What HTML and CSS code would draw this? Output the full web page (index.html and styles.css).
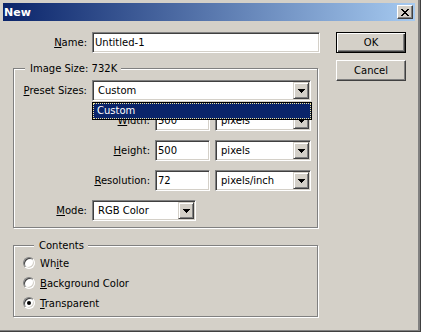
FILE: index.html
```html
<!DOCTYPE html>
<html lang="en">
<head>
    <meta charset="UTF-8">
    <meta name="viewport" content="width=device-width, initial-scale=1.0">
    <title>New</title>
    <link rel="stylesheet" href="styles.css">
</head>
<body>
    <div class="window">
        <div class="titlebar">
            <span class="title">New</span>
            <span class="close-btn">
                <svg width="8" height="7" viewBox="0 0 8 7"><path d="M0 0h2v1h-2z M6 0h2v1h-2z M1 1h2v1h-2z M5 1h2v1h-2z M2 2h4v1h-4z M3 3h2v1h-2z M2 4h4v1h-4z M1 5h2v1h-2z M5 5h2v1h-2z M0 6h2v1h-2z M6 6h2v1h-2z" fill="#000"/></svg>
            </span>
        </div>

        <div class="dialog">
            <div class="form">
                <div class="row">
                    <label class="lbl lbl-name"><u>N</u>ame:</label>
                    <div class="field name-field">Untitled-1</div>
                </div>

                <fieldset class="group image-group">
                    <legend>Image Size: 732K</legend>
                    <div class="rows">
                        <div class="row">
                            <label class="lbl lbl-short"><u>P</u>reset Sizes:</label>
                            <div class="combo preset-combo">
                                <span class="combo-text">Custom</span>
                                <span class="combo-btn"><svg width="7" height="4" viewBox="0 0 7 4"><path d="M0 0h7v1h-1v1h-1v1h-1v1h-1v-1h-1v-1h-1v-1h-1z" fill="#000"/></svg></span>
                                <div class="dropdown"><div class="dropdown-item">Custom</div></div>
                            </div>
                        </div>
                        <div class="row">
                            <label class="lbl lbl-long"><u>W</u>idth:</label>
                            <div class="field num-field">500</div>
                            <div class="combo unit-combo">
                                <span class="combo-text">pixels</span>
                                <span class="combo-btn"><svg width="7" height="4" viewBox="0 0 7 4"><path d="M0 0h7v1h-1v1h-1v1h-1v1h-1v-1h-1v-1h-1v-1h-1z" fill="#000"/></svg></span>
                            </div>
                        </div>
                        <div class="row">
                            <label class="lbl lbl-long"><u>H</u>eight:</label>
                            <div class="field num-field">500</div>
                            <div class="combo unit-combo">
                                <span class="combo-text">pixels</span>
                                <span class="combo-btn"><svg width="7" height="4" viewBox="0 0 7 4"><path d="M0 0h7v1h-1v1h-1v1h-1v1h-1v-1h-1v-1h-1v-1h-1z" fill="#000"/></svg></span>
                            </div>
                        </div>
                        <div class="row">
                            <label class="lbl lbl-long"><u>R</u>esolution:</label>
                            <div class="field num-field">72</div>
                            <div class="combo unit-combo">
                                <span class="combo-text">pixels/inch</span>
                                <span class="combo-btn"><svg width="7" height="4" viewBox="0 0 7 4"><path d="M0 0h7v1h-1v1h-1v1h-1v1h-1v-1h-1v-1h-1v-1h-1z" fill="#000"/></svg></span>
                            </div>
                        </div>
                        <div class="row">
                            <label class="lbl lbl-short"><u>M</u>ode:</label>
                            <div class="combo mode-combo">
                                <span class="combo-text">RGB Color</span>
                                <span class="combo-btn"><svg width="7" height="4" viewBox="0 0 7 4"><path d="M0 0h7v1h-1v1h-1v1h-1v1h-1v-1h-1v-1h-1v-1h-1z" fill="#000"/></svg></span>
                            </div>
                        </div>
                    </div>
                </fieldset>

                <fieldset class="group contents-group">
                    <legend>Contents</legend>
                    <div class="radios">
                        <div class="radio-row"><span class="radio"></span><span>Wh<u>i</u>te</span></div>
                        <div class="radio-row"><span class="radio"></span><span><u>B</u>ackground Color</span></div>
                        <div class="radio-row"><span class="radio checked"></span><span><u>T</u>ransparent</span></div>
                    </div>
                </fieldset>
            </div>

            <div class="buttons">
                <div class="btn default">OK</div>
                <div class="btn">Cancel</div>
            </div>
        </div>
    </div>
</body>
</html>
```

FILE: styles.css
```css
body {
    margin: 0;
    background: #d4d0c8;
    font-family: "DejaVu Sans", sans-serif;
    font-size: 10px;
    color: #000;
}
.window {
    width: 421px;
    height: 332px;
    box-sizing: border-box;
    background: #d4d0c8;
    box-shadow: inset -1px -1px 0 #404040, inset -3px -2px 0 #808080;
    overflow: hidden;
}
.titlebar {
    height: 18px;
    margin: 3px 6px 0 3px;
    padding: 0 2px 0 1px;
    display: flex;
    align-items: center;
    justify-content: space-between;
    background: linear-gradient(to right, #0a246a, #a6caf0);
}
.title {
    color: #fff;
    font-weight: bold;
    font-size: 11px;
}
.close-btn {
    width: 16px;
    height: 14px;
    box-sizing: border-box;
    display: flex;
    align-items: center;
    justify-content: center;
    padding-right: 1px;
    background: #d4d0c8;
    border: 1px solid;
    border-color: #fff #404040 #404040 #fff;
    box-shadow: inset -1px -1px 0 #808080;
}
.close-btn svg {
    display: block;
}
.dialog {
    display: flex;
    padding-top: 11px;
}
.form {
    width: 320px;
}
.row {
    display: flex;
    align-items: center;
    height: 21px;
}
.lbl {
    text-align: right;
    margin-right: 5px;
    white-space: nowrap;
}
.lbl-name {
    width: 87px;
}
.lbl-short {
    width: 73px;
}
.lbl-long {
    width: 136px;
}
.field, .combo {
    height: 21px;
    box-sizing: border-box;
    background: #fff;
    border: 1px solid;
    border-color: #808080 #fff #fff #808080;
    box-shadow: inset 1px 1px 0 #404040, inset -1px -1px 0 #d4d0c8;
    padding: 1px 1px 1px 2px;
    line-height: 17px;
    white-space: nowrap;
}
.name-field {
    width: 228px;
}
.num-field {
    width: 55px;
    margin-right: 5px;
}
.combo {
    position: relative;
    display: flex;
    padding: 1px;
}
.preset-combo {
    width: 219px;
}
.unit-combo {
    width: 96px;
}
.mode-combo {
    width: 104px;
}
.combo-text {
    flex: 1;
    padding-left: 4px;
}
.combo-btn {
    width: 16px;
    height: 17px;
    box-sizing: border-box;
    display: flex;
    align-items: center;
    justify-content: center;
    background: #d4d0c8;
    border: 1px solid;
    border-color: #d4d0c8 #404040 #404040 #d4d0c8;
    box-shadow: inset 1px 1px 0 #fff, inset -1px -1px 0 #808080;
}
.combo-btn svg {
    display: block;
}
.dropdown {
    position: absolute;
    top: calc(100% + 2px);
    left: -1px;
    right: -2px;
    height: 18px;
    box-sizing: border-box;
    border: 1px solid #000;
    background: #0a246a;
    z-index: 2;
}
.dropdown-item {
    height: 16px;
    box-sizing: border-box;
    border: 1px dotted #f0e6a0;
    color: #fff;
    line-height: 14px;
    padding-left: 3px;
}
.group {
    box-sizing: border-box;
    width: 305px;
    min-width: 0;
    margin: 0 0 0 13px;
    border: 1px solid #808080;
    box-shadow: inset 1px 1px 0 #fff, 1px 1px 0 #fff;
}
.group legend {
    margin-left: 11px;
    padding: 0 4px 0 5px;
    line-height: 13px;
    background: #d4d0c8;
}
.image-group {
    margin-top: 9px;
    padding: 5px 0 6px 0;
}
.rows {
    display: flex;
    flex-direction: column;
    gap: 9px;
}
.contents-group {
    margin-top: 11px;
    padding: 3px 0 5px 9px;
}
.radios {
    display: flex;
    flex-direction: column;
    gap: 4px;
}
.radio-row {
    display: flex;
    align-items: center;
    height: 16px;
    gap: 5px;
}
.radio {
    width: 12px;
    height: 12px;
    box-sizing: border-box;
    border-radius: 50%;
    background: #fff;
    border: 1px solid;
    border-color: #808080 #fff #fff #808080;
    box-shadow: inset 1px 1px 0 #404040, inset -1px -1px 0 #d4d0c8;
    display: flex;
    align-items: center;
    justify-content: center;
}
.radio.checked::after {
    content: "";
    width: 4px;
    height: 4px;
    border-radius: 50%;
    background: #000;
}
.buttons {
    margin-left: 16px;
    width: 70px;
    display: flex;
    flex-direction: column;
    gap: 7px;
}
.btn {
    height: 21px;
    box-sizing: border-box;
    text-align: center;
    line-height: 19px;
    background: #d4d0c8;
    border: 1px solid;
    border-color: #fff #404040 #404040 #fff;
    box-shadow: inset -1px -1px 0 #808080;
}
.btn.default {
    border-color: #000;
    box-shadow: inset 1px 1px 0 #fff, inset -1px -1px 0 #404040, inset -2px -2px 0 #808080;
}
```
